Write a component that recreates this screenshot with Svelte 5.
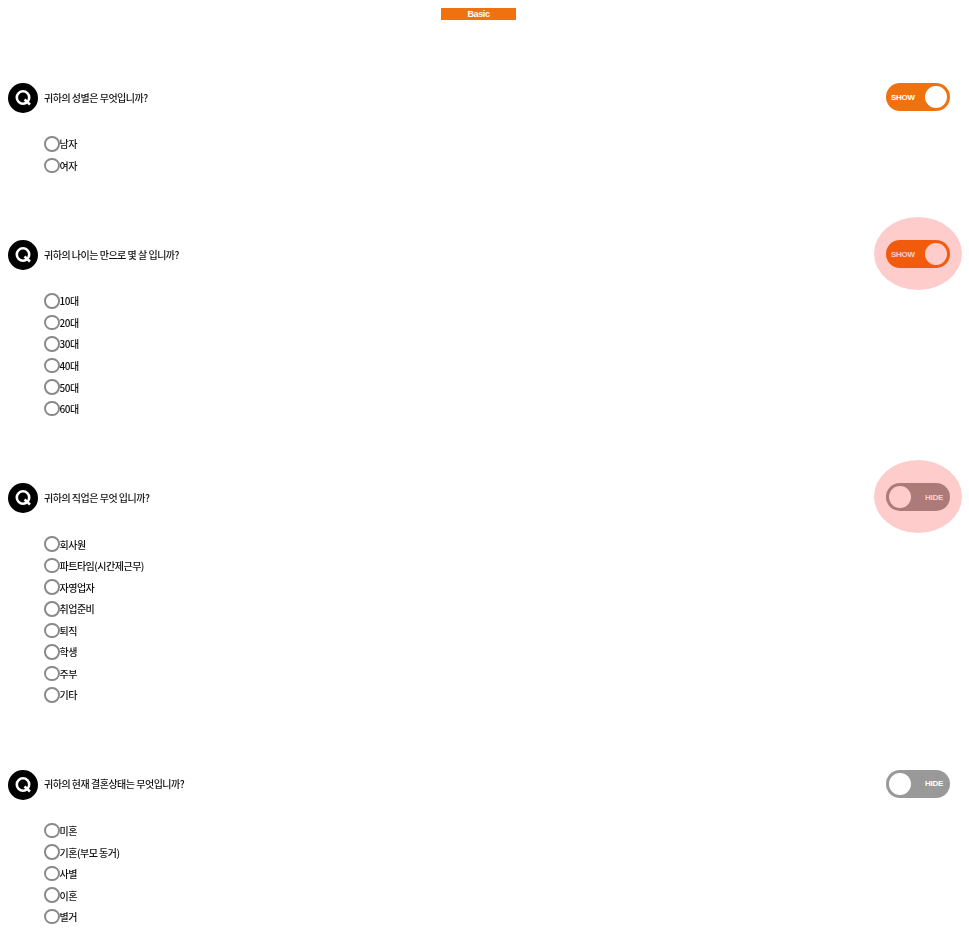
<script>
  const questions = [
    { title: '귀하의 성별은 무엇입니까?', options: ['남자', '여자'], on: true, halo: false },
    { title: '귀하의 나이는 만으로 몇 살 입니까?', options: ['10대', '20대', '30대', '40대', '50대', '60대'], on: true, halo: true },
    {
      title: '귀하의 직업은 무엇 입니까?',
      options: ['회사원', '파트타임(시간제근무)', '자영업자', '취업준비', '퇴직', '학생', '주부', '기타'],
      on: false,
      halo: true
    },
    { title: '귀하의 현재 결혼상태는 무엇입니까?', options: ['미혼', '기혼(부모 동거)', '사별', '이혼', '별거'], on: false, halo: false }
  ];
</script>

<main class="page">
  <div class="top">
    <button class="basic">Basic</button>
  </div>

  {#each questions as q}
    <section class="question">
      <header class="question__head">
        <svg class="q-mark" viewBox="0 0 30 30" width="30" height="30">
          <circle cx="15" cy="15" r="15" fill="#000" />
          <circle cx="15" cy="14.5" r="6.2" fill="none" stroke="#fff" stroke-width="2.6" />
          <path d="M16.5 16.5 L22 21.5" stroke="#fff" stroke-width="2.6" fill="none" />
        </svg>
        <h2 class="question__title">{q.title}</h2>
        <div class="toggle" class:toggle--on={q.on} class:toggle--halo={q.halo}>
          <span class="toggle__label">{q.on ? 'SHOW' : 'HIDE'}</span>
          <span class="toggle__knob"></span>
        </div>
      </header>
      <ul class="options">
        {#each q.options as option}
          <li class="option">
            <span class="radio"></span>
            <span>{option}</span>
          </li>
        {/each}
      </ul>
    </section>
  {/each}
</main>

<style>
  :global(body) {
    background: #fff;
  }

  .page {
    font-family: 'Noto Sans CJK KR', 'Liberation Sans', sans-serif;
    color: #111;
    filter: blur(0.6px);
  }

  .top {
    display: flex;
    justify-content: center;
    padding-top: 8px;
    margin-bottom: 63px;
  }

  .basic {
    width: 75px;
    height: 12px;
    margin-left: -12px;
    padding: 0;
    border: 0;
    background: #f0720f;
    color: #fff;
    font: bold 9px/12px 'Liberation Sans', sans-serif;
    letter-spacing: -0.4px;
  }

  .question {
    padding: 0 19px 0 8px;
    margin-bottom: 64px;
  }

  .question:last-child {
    margin-bottom: 0;
  }

  .question__head {
    display: flex;
    align-items: center;
    height: 30px;
  }

  .q-mark {
    flex: none;
  }

  .question__title {
    flex: 1;
    margin: 0 0 2px 6px;
    font-size: 10px;
    font-weight: 500;
    letter-spacing: -0.5px;
  }

  .toggle {
    position: relative;
    align-self: flex-start;
    display: flex;
    align-items: center;
    justify-content: flex-end;
    box-sizing: border-box;
    width: 64px;
    height: 28px;
    padding: 0 7px;
    border-radius: 14px;
    background: #999;
    color: #fff;
    font: bold 8px 'Liberation Sans', sans-serif;
    letter-spacing: -0.3px;
  }

  .toggle--on {
    justify-content: flex-start;
    padding: 0 5px;
    background: #f0720f;
  }

  .toggle__knob {
    position: absolute;
    top: 3px;
    left: 3px;
    width: 22px;
    height: 22px;
    border-radius: 50%;
    background: #fff;
  }

  .toggle--on .toggle__knob {
    left: 39px;
  }

  .toggle--halo::after {
    content: '';
    position: absolute;
    top: -23px;
    left: -12px;
    width: 88px;
    height: 73px;
    border-radius: 50%;
    background: rgba(255, 0, 0, 0.2);
  }

  .options {
    list-style: none;
    margin: 20px 0 0 36px;
    padding: 0;
  }

  .option {
    display: flex;
    align-items: center;
    height: 21.55px;
    font-size: 10px;
    font-weight: 500;
    letter-spacing: -0.5px;
  }

  .radio {
    flex: none;
    box-sizing: border-box;
    width: 15.5px;
    height: 15.5px;
    border: 2px solid #8a8a8a;
    border-radius: 50%;
  }
</style>
